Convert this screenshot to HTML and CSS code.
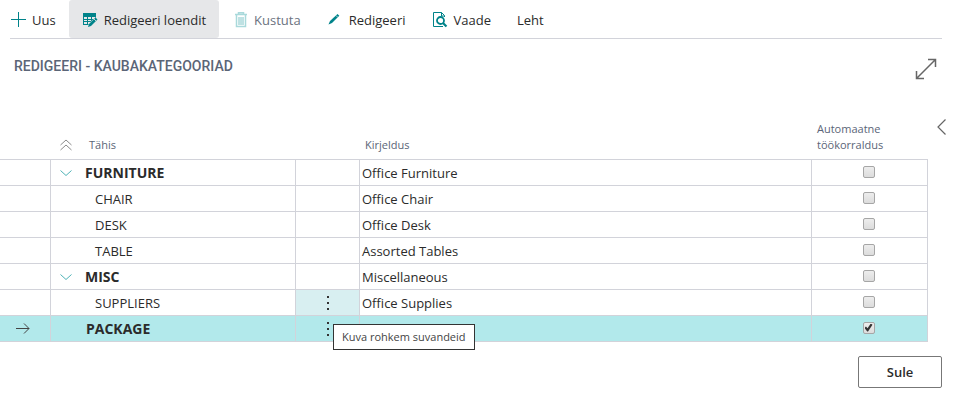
FILE: index.html
```html
<!DOCTYPE html>
<html lang="et">
<head>
<meta charset="utf-8">
<title>Redigeeri - Kaubakategooriad</title>
<link rel="stylesheet" href="styles.css">
</head>
<body>
<nav class="toolbar">
  <button class="tool" type="button"><svg class="icon" width="16" height="16" viewBox="0 0 16 16" fill="none" stroke="#00838a"><path d="M8.500 0v15M1 7.500h15"/></svg>Uus</button>
  <button class="tool tool-active" type="button"><svg class="icon" width="16" height="16" viewBox="0 0 16 16"><path fill="#00838a" d="M1 1h13v12H1z"/><path fill="#e6e7e9" d="M2 5h3v2H2zM6 5h3v2H6zM10 5h3v2h-3zM2 8h3v1H2zM6 8h3v1H6zM2 10h3v2H2zM6 10h3v2H6zM10 8h3v1h-3zM10 10h4v3h-4z"/><path stroke="#e6e7e9" stroke-width="5" d="M8 14l7-7"/><path fill="#00838a" d="M13.500 5.500l2 2L9 14l-3 1 1-3z"/><path stroke="#e6e7e9" stroke-width=".8" d="M12 7l2 2"/></svg>Redigeeri loendit</button>
  <button class="tool tool-off" type="button"><svg class="icon" width="16" height="16" viewBox="0 0 16 16" fill="none" stroke="#a9d9db"><path d="M3 2.500h12M6.500 2V.8h5V2M4.500 3v11.500h9V3" stroke-width="1.500"/><path d="M7 5v8M9 5v8M11 5v8" stroke="#7fc4c7"/></svg>Kustuta</button>
  <button class="tool" type="button"><svg class="icon" width="16" height="16" viewBox="0 0 16 16"><path fill="#00838a" d="M10.500 2l1.800 1.800L5 11l-3.500 1.500L3 9z"/><path stroke="#fff" stroke-width=".7" d="M9 3.500L11 5.500"/></svg>Redigeeri</button>
  <button class="tool" type="button"><svg class="icon" width="16" height="16" viewBox="0 0 16 16" fill="none" stroke="#00838a"><path d="M12.500 5V3.500L9.500.5h-8v14H11M9.500.5v3.500h3"/><circle cx="8.500" cy="8.500" r="3.500" stroke-width="1.800"/><path d="M11 11l3.500 3.500" stroke-width="2.200"/></svg>Vaade</button>
  <button class="tool" type="button">Leht</button>
</nav>
<header class="heading">
  <h1>REDIGEERI - KAUBAKATEGOORIAD</h1>
  <button class="bare" type="button" aria-label="Laienda"><svg width="22" height="22" viewBox="0 0 22 22" fill="none" stroke="#666" stroke-width="1.500"><path d="M1.500 20.500l19-19M13 1.500h7.500V9M1.500 13v7.500H9"/></svg></button>
</header>
<main class="content">
  <table class="grid">
    <colgroup><col class="c-mark"><col class="c-code"><col class="c-more"><col><col class="c-auto"></colgroup>
    <thead>
      <tr><th></th><th><div class="code"><svg class="fold" width="12" height="12" viewBox="0 0 12 12" fill="none" stroke="#8a8a8a"><path d="M.5 6L6 1l5.500 5M.5 11L6 6l5.500 5"/></svg><span class="th-code">Tähis</span></div></th><th></th><th class="th-desc">Kirjeldus</th><th class="th-auto">Automaatne töökorraldus</th></tr>
    </thead>
    <tbody>
      <tr><td></td><td><div class="code group"><svg class="fold" width="12" height="12" viewBox="0 0 12 12" fill="none" stroke="#4fb3b7"><path d="M.5 3.500L6 8.500l5.500-5"/></svg>FURNITURE</div></td><td></td><td>Office Furniture</td><td class="check"><input type="checkbox" aria-label="FURNITURE"></td></tr>
      <tr><td></td><td><div class="code child">CHAIR</div></td><td></td><td>Office Chair</td><td class="check"><input type="checkbox" aria-label="CHAIR"></td></tr>
      <tr><td></td><td><div class="code child">DESK</div></td><td></td><td>Office Desk</td><td class="check"><input type="checkbox" aria-label="DESK"></td></tr>
      <tr><td></td><td><div class="code child">TABLE</div></td><td></td><td>Assorted Tables</td><td class="check"><input type="checkbox" aria-label="TABLE"></td></tr>
      <tr><td></td><td><div class="code group"><svg class="fold" width="12" height="12" viewBox="0 0 12 12" fill="none" stroke="#4fb3b7"><path d="M.5 3.500L6 8.500l5.500-5"/></svg>MISC</div></td><td></td><td>Miscellaneous</td><td class="check"><input type="checkbox" aria-label="MISC"></td></tr>
      <tr><td></td><td><div class="code child">SUPPLIERS</div></td><td class="hover"><button class="bare more" type="button" aria-label="Rohkem"><svg width="4" height="16" viewBox="0 0 4 16" fill="#333"><path d="M1 1h2v2H1zM1 7h2v2H1zM1 13h2v2H1z"/></svg></button></td><td>Office Supplies</td><td class="check"><input type="checkbox" aria-label="SUPPLIERS"></td></tr>
      <tr class="current"><td><svg class="arrow" width="14" height="12" viewBox="0 0 14 12" fill="none" stroke="#444"><path d="M0 5.500h13M8 .5l5 5-5 5"/></svg></td><td><div class="code leaf">PACKAGE</div></td><td class="anchor"><button class="bare more" type="button" aria-label="Rohkem"><svg width="4" height="16" viewBox="0 0 4 16" fill="#333"><path d="M1 1h2v2H1zM1 7h2v2H1zM1 13h2v2H1z"/></svg></button><span class="tooltip" role="tooltip">Kuva rohkem suvandeid</span></td><td></td><td class="check"><input type="checkbox" aria-label="PACKAGE" checked></td></tr>
    </tbody>
  </table>
  <button class="bare side" type="button" aria-label="Ava paan"><svg width="9" height="16" viewBox="0 0 9 16" fill="none" stroke="#666" stroke-width="1.200"><path d="M8.500.5L1 8l7.500 7.500"/></svg></button>
</main>
<footer class="footer"><button class="close" type="button">Sule</button></footer>
</body>
</html>
```
FILE: styles.css
```css
* { box-sizing: border-box; }
body {
  margin: 0;
  background: #fff;
  color: #2b2b2b;
  font: 13px/18px "Open Sans", "Noto Sans", sans-serif;
}
button { font: inherit; color: inherit; cursor: pointer; }
svg { display: block; flex: none; }
.bare { border: 0; padding: 0; background: none; }

.toolbar {
  display: flex;
  height: 39px;
  margin: 0 11px 0 10px;
  border-bottom: 1px solid #d2d3da;
}
.tool {
  display: flex;
  align-items: center;
  gap: 6px;
  border: 0;
  padding: 2px 13px 0 13px;
  background: none;
  white-space: nowrap;
}
.tool:first-child { padding-left: 0; }
.tool-active { background: #e6e7e9; border-radius: 3px; }
.tool-off { color: #6b7280; }

.heading {
  display: flex;
  justify-content: space-between;
  align-items: flex-start;
  padding: 19px 16px 0 14px;
}
h1 {
  margin: 0;
  font: 500 14px/16px Roboto, sans-serif;
  color: #5b6577;
}

.content { display: flex; margin-top: 39px; }
.grid {
  flex: 1;
  table-layout: fixed;
  border-collapse: separate;
  border-spacing: 0;
}
.c-mark { width: 51px; }
.c-code { width: 245px; }
.c-more { width: 64px; }
.c-auto { width: 116px; }
th {
  height: 41px;
  padding: 0 5px 6px;
  border-bottom: 1px solid #d2d3da;
  font-weight: 400;
  font-size: 11px;
  line-height: 16px;
  text-align: left;
  vertical-align: bottom;
  color: #5b6577;
}
td {
  height: 26px;
  padding: 0 2px;
  border: solid #d2d3da;
  border-width: 0 1px 1px 0;
}
th:nth-child(2), td:nth-child(2) { padding-left: 9px; }
.code { display: flex; align-items: center; }
.fold { margin-right: 13px; }
.th-code { padding-left: 4px; }
.group, .leaf { font-weight: 700; font-size: 14px; }
.child { padding-left: 35px; }
.leaf { padding-left: 26px; }
.check { padding: 0 4px 2px 2px; text-align: center; line-height: 0; }
.hover { background: #d8eff1; }
.current { background: #b2e9eb; }
.arrow { margin-left: 14px; }
.more { display: block; margin: 0 auto; }
.anchor { position: relative; }
.tooltip {
  position: absolute;
  z-index: 1;
  left: 37px;
  top: 8px;
  padding: 3px 8px;
  border: 1px solid #333;
  background: #fff;
  font-size: 11px;
  white-space: nowrap;
  color: #444;
}
input[type="checkbox"] {
  appearance: none;
  display: inline-grid;
  place-items: center;
  width: 12px;
  height: 12px;
  margin: 0;
  border: 1px solid #a6a6a6;
  border-radius: 2px;
  background: linear-gradient(#ededed, #dcdcdc);
}
input[type="checkbox"]:checked::before {
  content: "";
  width: 8px;
  height: 8px;
  background: #333;
  clip-path: polygon(0 55%, 18% 38%, 38% 58%, 78% 0, 100% 16%, 44% 100%, 34% 100%);
}
.side { align-self: flex-start; margin: 0 7px 0 9px; }

.footer { display: flex; justify-content: flex-end; padding: 14px 11px 0; }
.close {
  width: 84px;
  height: 32px;
  border: 1px solid #777;
  border-radius: 2px;
  background: #fff;
  font-weight: 600;
}
```
